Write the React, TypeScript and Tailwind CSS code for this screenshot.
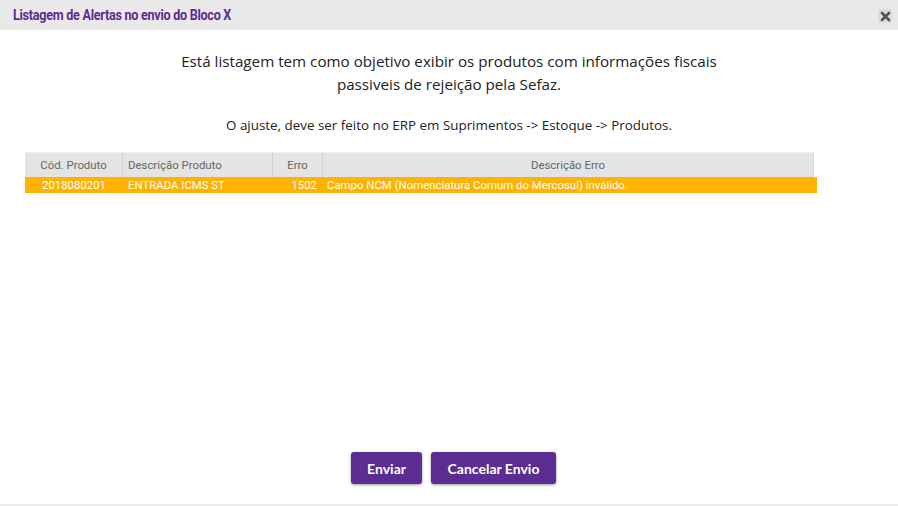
const rows = [
  {
    codigo: "2018080201",
    descricao: "ENTRADA ICMS ST",
    erro: "1502",
    descErro: "Campo NCM (Nomenclatura Comum do Mercosul) inválido.",
  },
];

const narrow = { fontFamily: '"Roboto", sans-serif' };

export default function App() {
  return (
    <div
      className="w-[898px] h-[506px] bg-white flex flex-col overflow-hidden"
      style={{ fontFamily: '"Open Sans", "Noto Sans", sans-serif' }}
    >
      {/* title bar */}
      <div className="h-[30px] bg-[#e9e9e9] flex items-center justify-between pl-[13px] pr-[6px] shrink-0">
        <span className="text-[14px] font-bold text-[#5b2d90] tracking-[-0.3px] scale-x-[0.9] origin-left" style={narrow}>
          Listagem de Alertas no envio do Bloco X
        </span>
        <button className="w-[14px] h-[14px] bg-[#dcdcdc] rounded-[2px] flex items-center justify-center mt-[2px]">
          <svg width="11" height="11" viewBox="0 0 11 11">
            <path d="M2 2 L9 9 M9 2 L2 9" stroke="#4a5560" strokeWidth="2.6" strokeLinecap="round" />
          </svg>
        </button>
      </div>

      <div className="flex-1 flex flex-col">
        <p className="text-center text-[15.2px] leading-[23px] text-[#222] mt-[20px]">
          Está listagem tem como objetivo exibir os produtos com informações fiscais
          <br />
          passiveis de rejeição pela Sefaz.
        </p>
        <p className="text-center text-[13.4px] text-[#222] mt-[19px]">
          O ajuste, deve ser feito no ERP em Suprimentos -&gt; Estoque -&gt; Produtos.
        </p>

        <div className="ml-[25px] w-[792px] mt-[17px] text-[11.4px]" style={narrow}>
          <div className="flex w-[789px] h-[25px] bg-[#e4e4e4] border-t border-[#efefef] text-[#666]">
            <div className="w-[98px] border-r border-[#d2d2d2] flex items-center justify-center">Cód. Produto</div>
            <div className="w-[150px] border-r border-[#d2d2d2] flex items-center pl-[5px]">Descrição Produto</div>
            <div className="w-[50px] border-r border-[#d2d2d2] flex items-center justify-center">Erro</div>
            <div className="flex-1 flex items-center justify-center border-r border-[#d8d8d8]">Descrição Erro</div>
          </div>
          {rows.map((r, i) => (
            <div key={i} className="flex h-[16px] bg-[#ffb300] text-white items-center">
              <div className="w-[98px] text-center">{r.codigo}</div>
              <div className="w-[150px] pl-[5px]">{r.descricao}</div>
              <div className="w-[50px] text-right pr-[6px]">{r.erro}</div>
              <div className="flex-1 pl-[4px]">{r.descErro}</div>
            </div>
          ))}
        </div>

        <div className="flex-1" />

        <div className="flex justify-center gap-[9px] pl-[9px] mb-[20px]">
          <button
            className="w-[71px] h-[32px] bg-[#5c2d91] text-white text-[14px] font-bold rounded-[3px] shadow-[0_1px_3px_rgba(0,0,0,0.4)]"
            style={{ fontFamily: "Lato, sans-serif" }}
          >
            Enviar
          </button>
          <button
            className="w-[125px] h-[32px] bg-[#5c2d91] text-white text-[14px] font-bold rounded-[3px] shadow-[0_1px_3px_rgba(0,0,0,0.4)]"
            style={{ fontFamily: "Lato, sans-serif" }}
          >
            Cancelar Envio
          </button>
        </div>
      </div>

      <div className="h-[2px] bg-[#ebebeb] shrink-0" />
    </div>
  );
}
